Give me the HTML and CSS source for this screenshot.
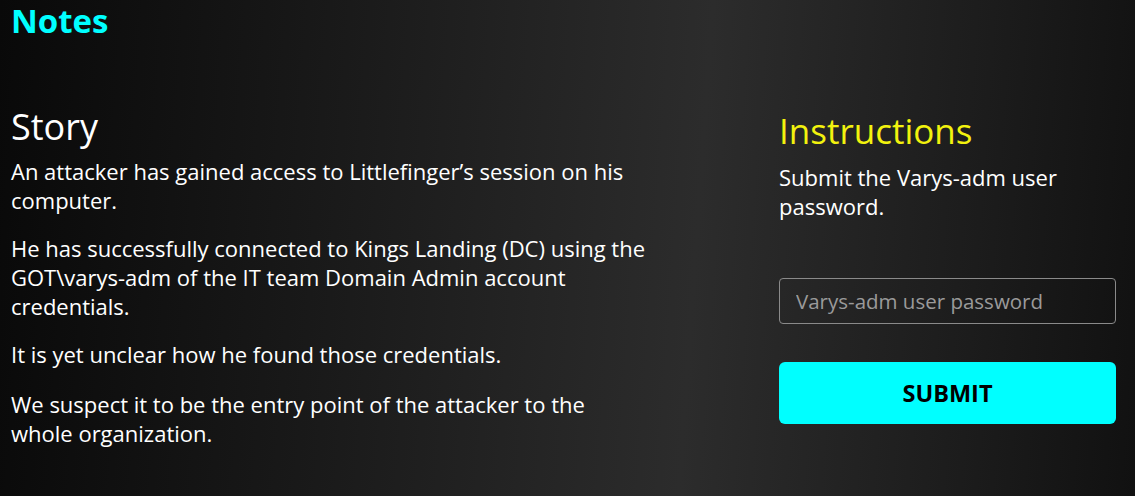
FILE: index.html
```html
<!DOCTYPE html>
<html lang="en">
<head>
<meta charset="utf-8">
<title>Notes</title>
<link rel="stylesheet" href="styles.css">
</head>
<body>
<main class="page">
  <h1 class="notes-title">Notes</h1>
  <div class="content">
    <section class="story">
      <h2 class="story-title">Story</h2>
      <p>An attacker has gained access to Littlefinger’s session on his computer.</p>
      <p>He has successfully connected to Kings Landing (DC) using the GOT\varys-adm of the IT team Domain Admin account credentials.</p>
      <p>It is yet unclear how he found those credentials.</p>
      <p>We suspect it to be the entry point of the attacker to the whole organization.</p>
    </section>
    <section class="instructions">
      <h2 class="instr-title">Instructions</h2>
      <p>Submit the Varys-adm user password.</p>
      <form class="answer-form">
        <input class="answer-input" type="text" placeholder="Varys-adm user password">
        <button class="submit-btn" type="button">SUBMIT</button>
      </form>
    </section>
  </div>
</main>
</body>
</html>
```

FILE: styles.css
```css
* { box-sizing: border-box; }
html, body { height: 100%; }
body {
  margin: 0;
  background: linear-gradient(94deg, #090909 0%, #1a1a1a 30%, #2c2c2c 61%, #1c1c1c 85%, #111111 100%);
  color: #ffffff;
  font-family: "Open Sans", "Lato", sans-serif;
  overflow: hidden;
}
.page {
  padding: 1px 0 0 11px;
}
.notes-title {
  margin: 0;
  color: #00ffff;
  font-size: 33px;
  font-weight: 700;
  line-height: 40px;
}
.content {
  display: flex;
  margin-top: 63px;
}
.story {
  width: 638px;
}
.story-title {
  margin: 0 0 7px;
  font-size: 36px;
  font-weight: 400;
  line-height: 46px;
}
.story p {
  margin: 0 0 19px;
  font-size: 22px;
  line-height: 29px;
}
.story p:nth-of-type(3) {
  margin-bottom: 21px;
}
.instructions {
  margin-left: 130px;
  width: 337px;
  padding-top: 4px;
}
.instr-title {
  margin: 0 0 9px;
  color: #f2f20e;
  font-size: 35px;
  font-weight: 400;
  line-height: 46px;
}
.instructions p {
  margin: 0;
  font-size: 22px;
  line-height: 29px;
  width: 300px;
}
.answer-form {
  display: flex;
  flex-direction: column;
  margin-top: 57px;
  gap: 38px;
}
.answer-input {
  height: 46px;
  width: 337px;
  background: transparent;
  border: 1px solid #8a8a8a;
  border-radius: 4px;
  padding: 0 16px;
  color: #ffffff;
  font-family: inherit;
  font-size: 20.5px;
}
.answer-input::placeholder { color: #9a9a9a; }
.submit-btn {
  height: 62px;
  width: 337px;
  background: #00ffff;
  border: none;
  border-radius: 6px;
  color: #000;
  font-family: inherit;
  font-size: 23.5px;
  font-weight: 700;
}
```
